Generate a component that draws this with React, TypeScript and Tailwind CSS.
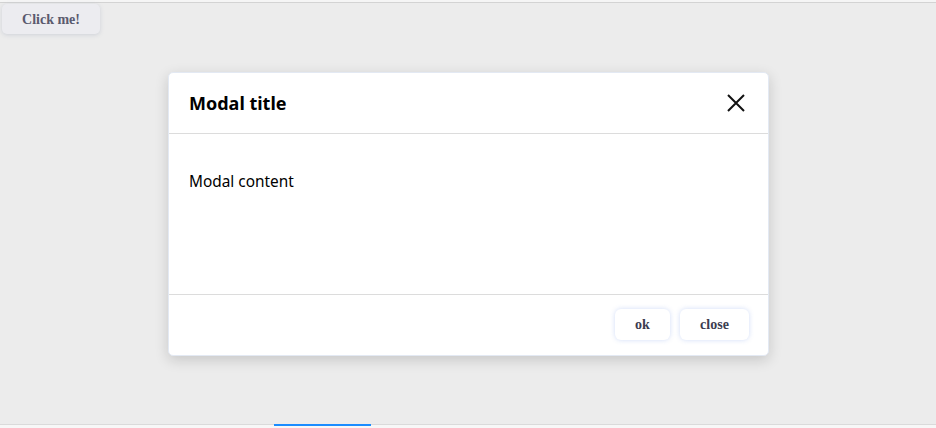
import React from "react";

export default function App() {
  return (
    <div className="relative w-[936px] h-[428px] overflow-hidden bg-[#f7f7f7] flex flex-col">
      <div className="h-[2px] bg-[#f5f5f5]" />
      <div className="h-[1px] bg-[#d3d3d3]" />
      <div className="h-[422px] bg-[#ececec] border-b border-[#dadada] flex flex-col">
        <div className="pl-[2px] pt-[1px]">
          <button
            className="w-[98px] h-[30px] rounded-[5px] bg-[#ececf0] shadow-[0_1px_4px_rgba(120,130,160,0.25)] text-[14px] font-bold text-[#5a5a6e]"
            style={{ fontFamily: '"Liberation Serif", serif' }}
          >
            Click me!
          </button>
        </div>
      </div>
      <div className="absolute left-[274px] top-[424px] w-[97px] h-[2px] bg-[#1a8cff]" />

      <div
        className="absolute left-[168px] top-[72px] w-[601px] h-[284px] bg-white rounded-[5px] border border-[#e3e9f3] shadow-[0_4px_14px_rgba(0,0,0,0.16)] flex flex-col"
        style={{ fontFamily: '"Noto Sans", "Open Sans", sans-serif' }}
      >
        <div className="h-[61px] shrink-0 flex items-center justify-between pl-[20px] pr-[22px] border-b border-[#dcdcdc]">
          <span className="text-[18px] font-bold text-black">Modal title</span>
          <svg width="20" height="20" viewBox="0 0 20 20" fill="none" stroke="#111" strokeWidth="2">
            <path d="M2 2L18 18M18 2L2 18" />
          </svg>
        </div>
        <div className="h-[160px] shrink-0 pl-[20px] pt-[36px] text-[15.4px] leading-[24px] text-black">
          Modal content
        </div>
        <div className="h-[61px] shrink-0 border-t border-[#dcdcdc] flex items-start justify-end gap-[10px] pr-[19px] pt-[14px]">
          <button
            className="w-[55px] h-[31px] rounded-[6px] bg-white shadow-[0_0_5px_rgba(100,140,230,0.3)] text-[14px] font-bold text-[#3c3c50]"
            style={{ fontFamily: '"Liberation Serif", serif' }}
          >
            ok
          </button>
          <button
            className="w-[69px] h-[31px] rounded-[6px] bg-white shadow-[0_0_5px_rgba(100,140,230,0.3)] text-[14px] font-bold text-[#3c3c50]"
            style={{ fontFamily: '"Liberation Serif", serif' }}
          >
            close
          </button>
        </div>
      </div>
    </div>
  );
}
